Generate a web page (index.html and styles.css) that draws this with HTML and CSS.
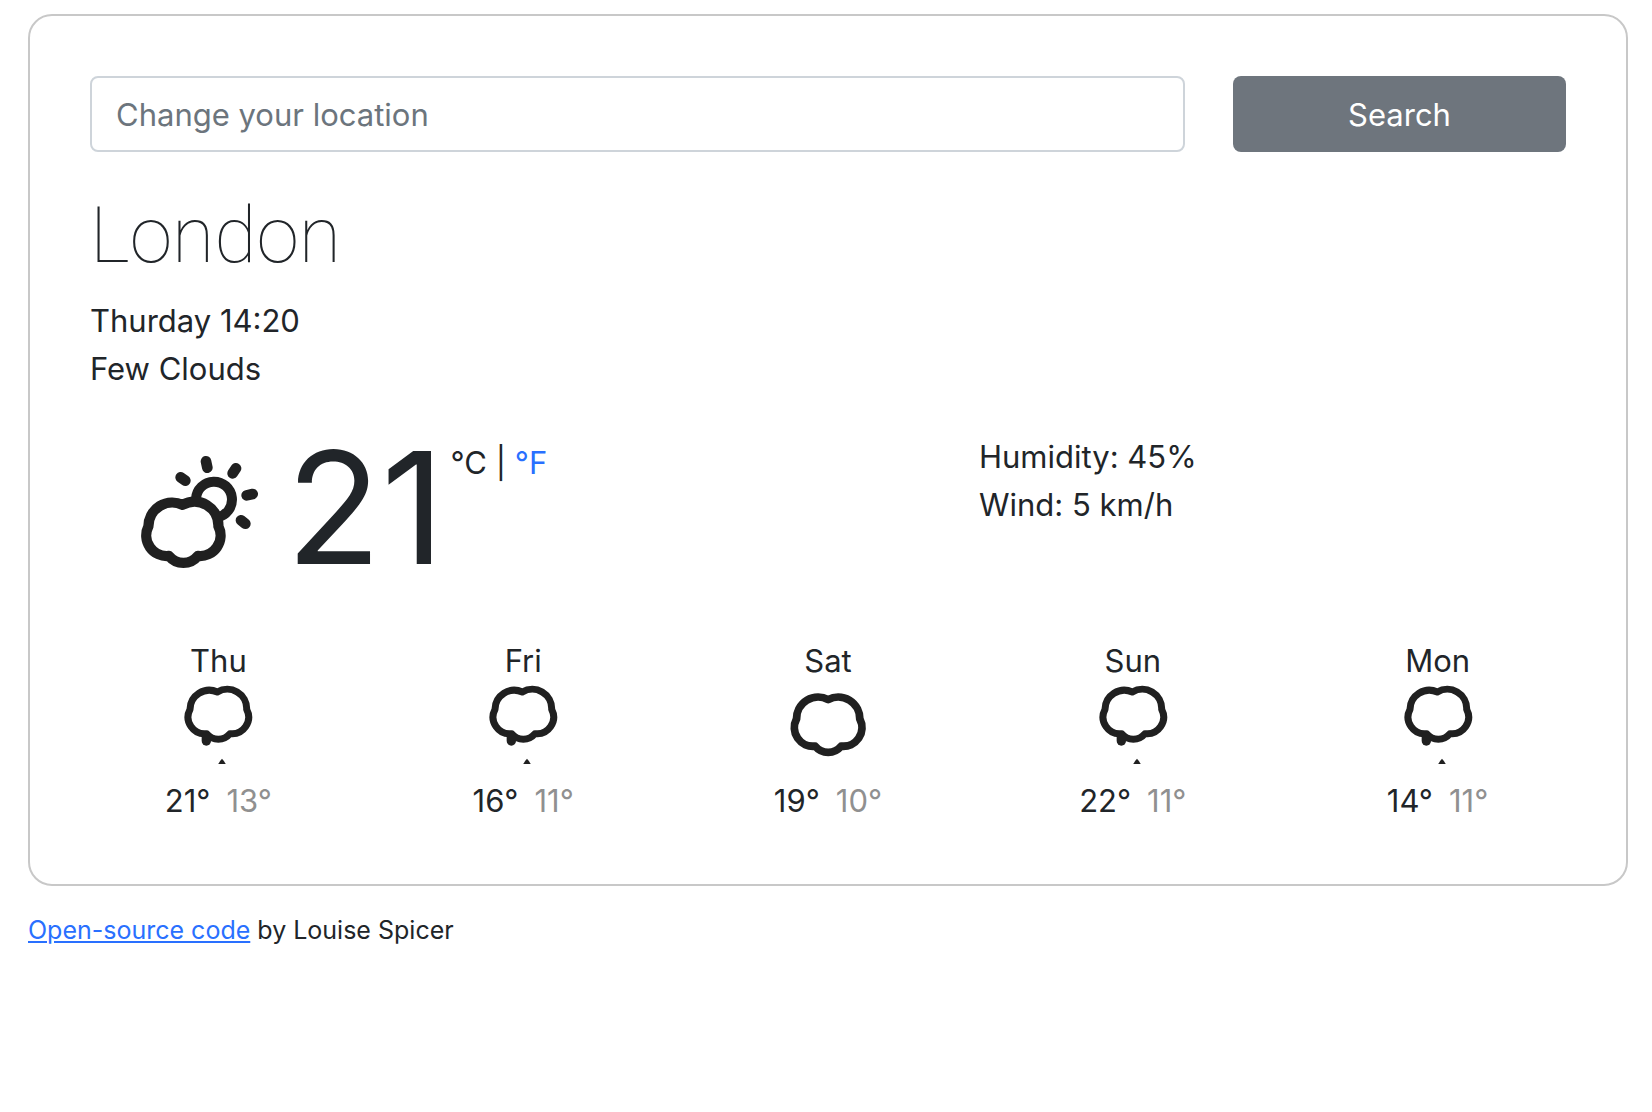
FILE: index.html
```html
<!DOCTYPE html>
<html lang="en">
<head>
  <meta charset="utf-8">
  <meta name="viewport" content="width=device-width, initial-scale=1">
  <title>Weather in London</title>
  <link rel="stylesheet" href="styles.css">
</head>
<body>
  <svg class="sprite" aria-hidden="true">
    <symbol id="cloud" viewBox="114 162 240 240">
      <path class="stroke" transform="translate(-28 1) scale(1.117)" d="M235 186A58 58 0 0 0 150 238A50 50 0 0 0 200 311A45 45 0 0 0 270 311A50 50 0 0 0 320 238A58 58 0 0 0 235 186Z"/>
    </symbol>
    <symbol id="rain" viewBox="114 162 240 240">
      <path class="stroke" d="M232 186A58 58 0 0 0 150 238A50 50 0 0 0 200 311A45 45 0 0 0 270 311A50 50 0 0 0 320 238A58 58 0 0 0 232 186Z"/>
      <path class="drop" d="M199 320V333"/>
      <path class="tip" d="M246 386Q254 394 257 402H235Q238 394 246 386Z"/>
    </symbol>
  </svg>

  <main class="card">
    <form class="row" onsubmit="return false">
      <input class="search-input" type="search" aria-label="Location" placeholder="Change your location">
      <button class="search-button" type="submit">Search</button>
    </form>

    <h1 class="city">London</h1>
    <ul class="details">
      <li>Thurday 14:20</li>
      <li>Few Clouds</li>
    </ul>

    <section class="row current">
      <div class="temperature">
        <svg class="current-icon" viewBox="0 9 450 450" role="img" aria-label="Few clouds">
          <path class="sun" d="M228 206A54 54 0 1 1 292 262"/>
          <path class="ray" d="M258 94L262 113M348 115L338 130M182 142L196 152M380 196L398 192M363 271L376 281"/>
          <path class="big-cloud" transform="translate(-100 -5) scale(1.235)" d="M233 186A58 58 0 0 0 150 238A50 50 0 0 0 200 310A45 45 0 0 0 270 310A50 50 0 0 0 320 238A58 58 0 0 0 233 186Z"/>
        </svg>
        <strong class="degrees">21</strong>
        <span class="units">°C | <a href="#">°F</a></span>
      </div>
      <ul class="details conditions">
        <li>Humidity: 45%</li>
        <li>Wind: 5 km/h</li>
      </ul>
    </section>

    <section class="forecast">
      <div class="day">
        <div>Thu</div>
        <svg class="day-icon" role="img" aria-label="Rain"><use href="#rain"/></svg>
        <div class="range"><span>21°</span><span class="low">13°</span></div>
      </div>
      <div class="day">
        <div>Fri</div>
        <svg class="day-icon" role="img" aria-label="Rain"><use href="#rain"/></svg>
        <div class="range"><span>16°</span><span class="low">11°</span></div>
      </div>
      <div class="day">
        <div>Sat</div>
        <svg class="day-icon" role="img" aria-label="Cloudy"><use href="#cloud"/></svg>
        <div class="range"><span>19°</span><span class="low">10°</span></div>
      </div>
      <div class="day">
        <div>Sun</div>
        <svg class="day-icon" role="img" aria-label="Rain"><use href="#rain"/></svg>
        <div class="range"><span>22°</span><span class="low">11°</span></div>
      </div>
      <div class="day">
        <div>Mon</div>
        <svg class="day-icon" role="img" aria-label="Rain"><use href="#rain"/></svg>
        <div class="range"><span>14°</span><span class="low">11°</span></div>
      </div>
    </section>
  </main>

  <footer class="credit"><a href="#">Open-source code</a> by Louise Spicer</footer>
</body>
</html>
```

FILE: styles.css
```css
* {
  box-sizing: border-box;
}

body {
  margin: 0;
  padding: 14px 24px 14px 28px;
  background: #fff;
  color: #212529;
  font-family: Inter, "Liberation Sans", sans-serif;
  font-size: 31px;
  line-height: 48px;
}

a {
  color: #2970ff;
}

.sprite {
  display: none;
}

.card {
  padding: 60px 60px 59px;
  border: 2px solid #c8c8c8;
  border-radius: 24px;
}

.row {
  display: grid;
  grid-template-columns: repeat(12, 1fr);
  column-gap: 48px;
}

.search-input,
.search-button {
  height: 76px;
  margin: 0;
  border-radius: 8px;
  font: inherit;
}

.search-input {
  grid-column: span 9;
  min-width: 0;
  padding: 0 24px;
  border: 2px solid #ced4da;
  background: #fff;
  color: #212529;
  appearance: none;
}

.search-input::placeholder {
  color: #6c757d;
  opacity: 1;
}

.search-button {
  grid-column: span 3;
  padding: 2px 0 0;
  border: 0;
  background: #6e757d;
  color: #fff;
}

.city {
  margin: 36px 0 13px;
  font-family: Roboto, Inter, sans-serif;
  font-size: 77px;
  font-weight: 100;
  line-height: 96px;
}

.details {
  margin: 0;
  padding: 0;
  list-style: none;
}

.current {
  margin-top: 40px;
}

.temperature {
  display: flex;
  grid-column: span 7;
  padding-left: 30px;
}

.current-icon {
  width: 150px;
  height: 150px;
  margin-right: 16px;
}

.degrees {
  font-size: 156px;
  font-weight: 400;
  line-height: 150px;
}

.units {
  margin: 6px 0 0 6px;
}

.units a {
  text-decoration: none;
}

.conditions {
  grid-column: span 5;
}

.forecast {
  display: grid;
  grid-template-columns: repeat(5, 1fr);
  gap: 48px;
  margin-top: 54px;
  text-align: center;
}

.day-icon {
  display: block;
  width: 80px;
  height: 80px;
  margin: -1px auto 13px;
}

.range {
  display: flex;
  justify-content: center;
  gap: 16px;
}

.low {
  color: #909090;
}

.credit {
  margin-top: 20px;
  font-size: 25px;
}

.stroke,
.drop,
.sun,
.ray,
.big-cloud {
  fill: none;
  stroke: #202020;
  stroke-linecap: round;
  stroke-linejoin: round;
}

.stroke {
  stroke-width: 21px;
}

.drop {
  stroke-width: 28px;
}

.tip {
  fill: #202020;
}

.sun {
  stroke-width: 30px;
}

.ray {
  stroke-width: 32px;
}

.big-cloud {
  stroke-width: 25px;
}
```
